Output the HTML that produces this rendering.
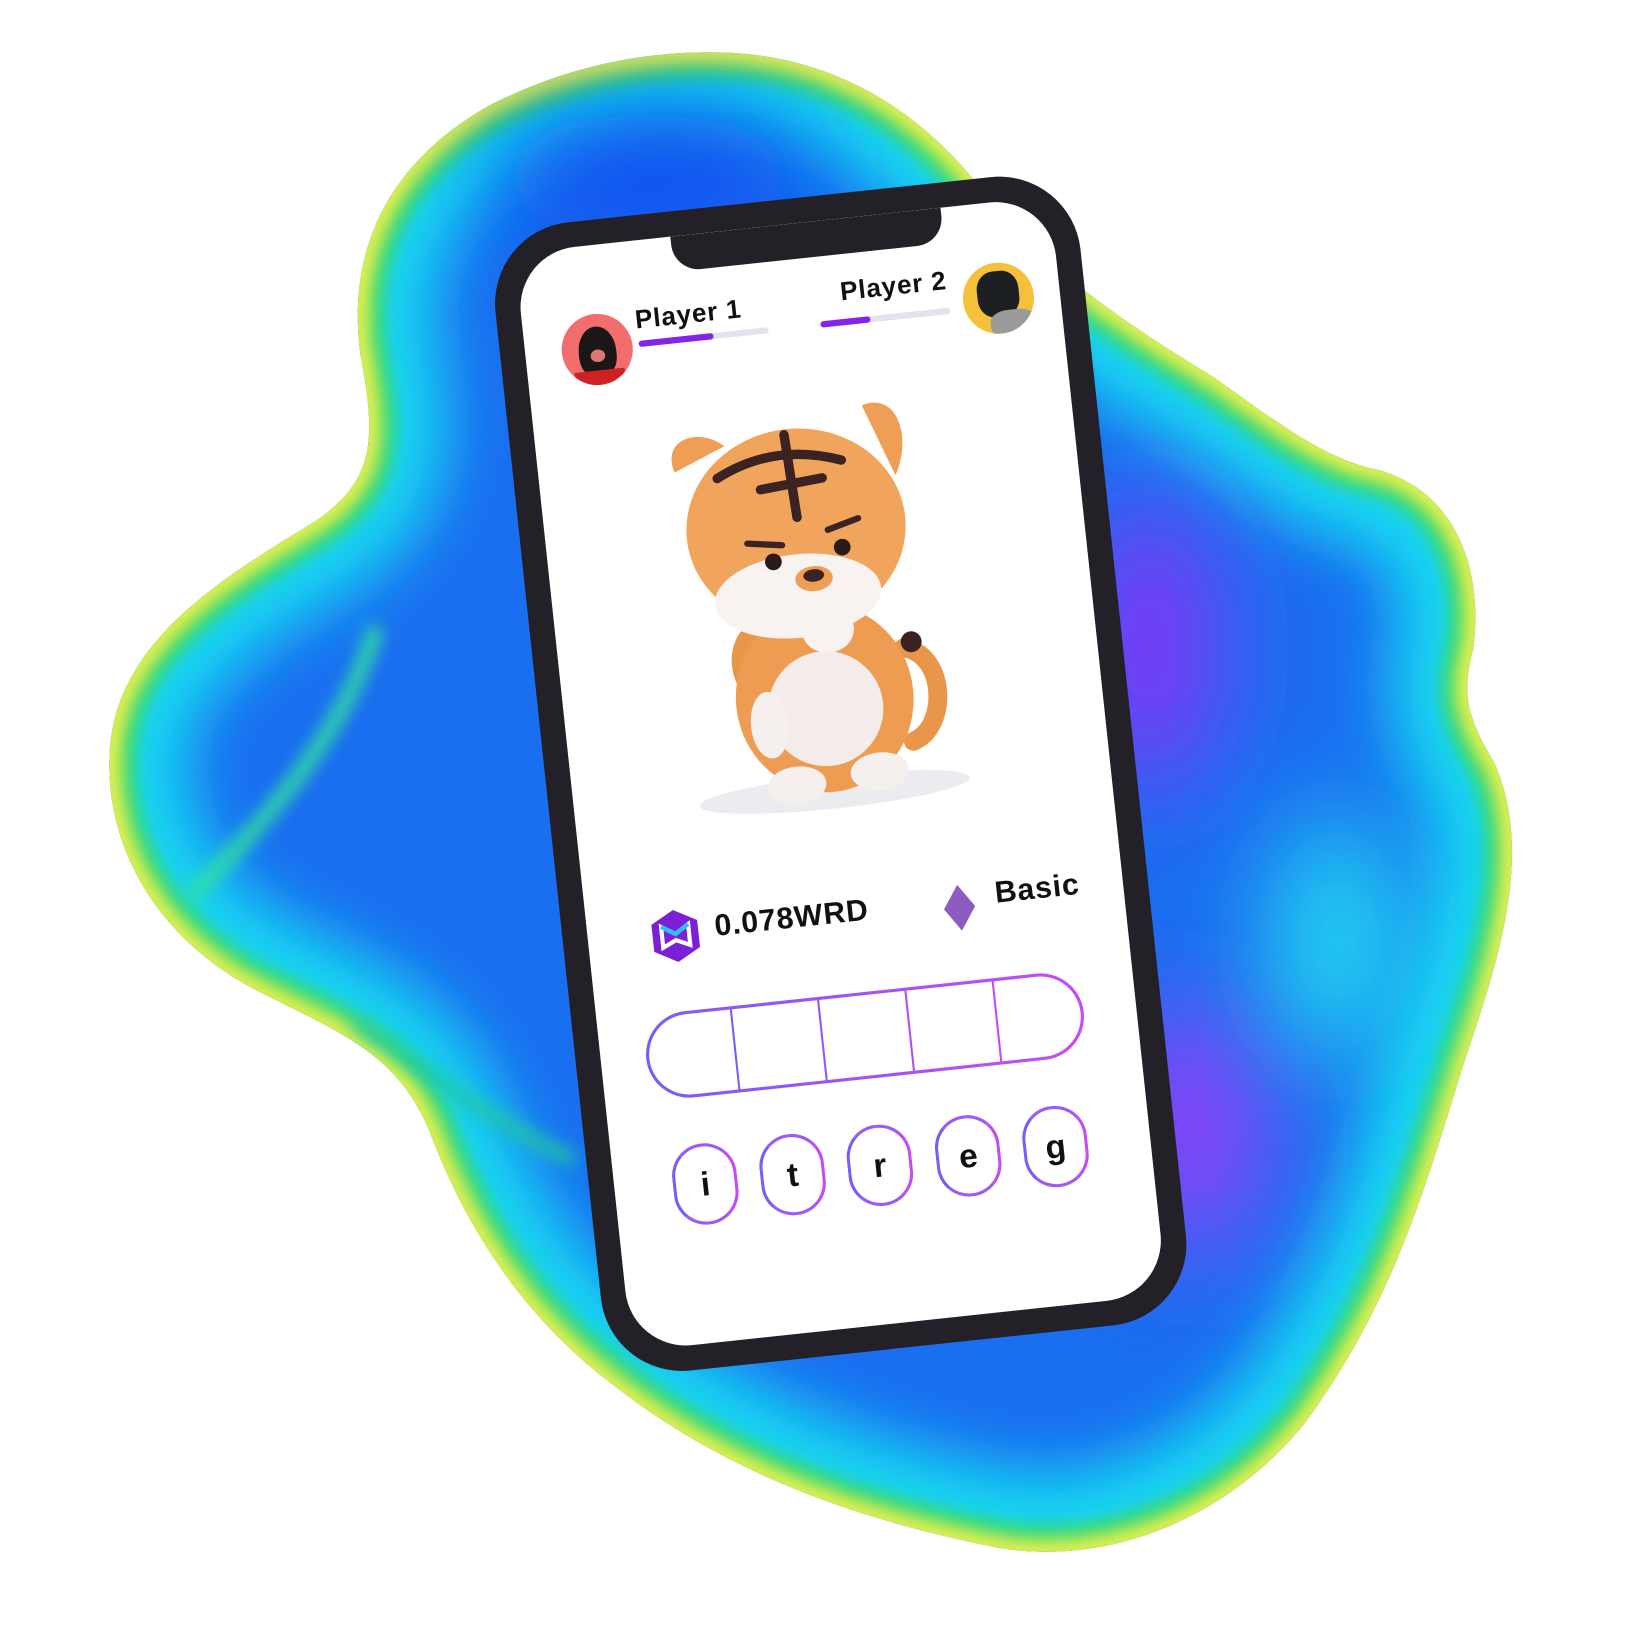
<!DOCTYPE html>
<html><head><meta charset="utf-8"><style>
html,body{margin:0;padding:0;background:#fff;width:1630px;height:1652px;overflow:hidden}
#w{position:absolute;left:0;top:0;width:1560px;height:1581px;transform:scale(1.045);transform-origin:0 0}
#blob{position:absolute;left:0;top:0}
#phone{position:absolute;width:563px;height:1105px;left:523px;top:188px;transform:rotate(-6.1deg);background:#232127;border-radius:78px;font-family:"Liberation Sans",sans-serif}
#screen{position:absolute;left:24px;top:24px;right:24px;bottom:24px;background:#fff;border-radius:58px;overflow:hidden}
#notch{position:absolute;left:150px;top:0;width:260px;height:34px;background:#232127;border-radius:0 0 26px 26px}
.ab{position:absolute}
.av{position:absolute;width:68px;height:68px;border-radius:50%;overflow:hidden}
.t{position:absolute;font-size:25px;font-weight:bold;color:#111;letter-spacing:.8px;white-space:nowrap}
.bar{position:absolute;height:6px;border-radius:3px;background:#e1e4ea}
.bar i{position:absolute;left:0;top:0;height:6px;border-radius:3px;background:#8424e8}
.lt{position:absolute;width:62px;height:78px;border:3px solid #9a5cf5;border-radius:31px;box-sizing:border-box;text-align:center;font-size:32px;font-weight:bold;line-height:72px;color:#111;border-left-color:#7a5cf8;border-right-color:#c44cf5}
</style></head><body><div id="w">
<svg id="blob" width="1560" height="1581" viewBox="0 0 1560 1581">
<defs>
<clipPath id="c"><path id="bp" d="M680 50 C800 50 880 110 930 170 C980 240 1060 300 1160 360 C1230 410 1270 440 1320 450 C1390 470 1420 540 1410 620 C1400 660 1400 680 1430 730 C1470 820 1430 930 1400 1020 C1360 1150 1330 1250 1250 1360 C1170 1460 1050 1500 950 1480 C800 1450 680 1400 580 1320 C490 1250 440 1160 410 1080 C380 1010 330 990 250 950 C150 900 100 810 105 720 C110 620 200 560 300 500 C360 460 360 420 345 340 C330 230 380 150 470 100 C540 65 610 50 680 50 Z"/></clipPath>
<filter id="b1" x="-50%" y="-50%" width="200%" height="200%"><feGaussianBlur stdDeviation="30"/></filter>
<filter id="b2" x="-50%" y="-50%" width="200%" height="200%"><feGaussianBlur stdDeviation="8"/></filter>
<filter id="b3" x="-100%" y="-100%" width="300%" height="300%"><feGaussianBlur stdDeviation="50"/></filter>
</defs>
<g clip-path="url(#c)">
<rect width="1560" height="1581" fill="#1a6ef0"/>
<use href="#bp" fill="none" stroke="#12d8f2" stroke-width="150" filter="url(#b1)"/>
<use href="#bp" fill="none" stroke="#34d870" stroke-width="50" filter="url(#b2)"/>
<use href="#bp" fill="none" stroke="#eef050" stroke-width="22" filter="url(#b2)"/>
<ellipse cx="1100" cy="620" rx="60" ry="140" fill="#8a30f8" filter="url(#b3)"/>
<ellipse cx="1140" cy="1080" rx="70" ry="120" fill="#9040f8" filter="url(#b3)"/>
<ellipse cx="620" cy="170" rx="150" ry="60" fill="#1050f0" filter="url(#b3)"/>
<ellipse cx="1280" cy="900" rx="60" ry="120" fill="#20e0f0" filter="url(#b3)"/>
<path d="M180 860 C260 780 330 700 360 600" stroke="#30e0a0" stroke-width="14" fill="none" filter="url(#b2)"/>
<path d="M340 980 C420 1030 480 1080 550 1110" stroke="#20c8a0" stroke-width="12" fill="none" filter="url(#b2)"/>
</g>
</svg>
<div id="phone"><div id="screen">
<div id="notch"></div>
<div class="av" style="left:35px;top:66px;background:#f26d6d"><div class="ab" style="left:16px;top:12px;width:36px;height:48px;background:#1b1716;border-radius:50% 50% 40% 40%"></div><div class="ab" style="left:27px;top:34px;width:14px;height:12px;background:#d77;border-radius:50%"></div><div class="ab" style="left:10px;top:54px;width:48px;height:14px;background:#c22"></div></div>
<div class="t" style="left:108px;top:62px">Player 1</div>
<div class="bar" style="left:109px;top:96px;width:125px"><i style="width:72px"></i></div>
<div class="t" style="left:306px;top:56px">Player 2</div>
<div class="bar" style="left:284px;top:96px;width:125px"><i style="width:48px"></i></div>
<div class="av" style="left:422px;top:58px;background:#f5c03a"><div class="ab" style="left:14px;top:8px;width:40px;height:44px;background:#1d2022;border-radius:40%"></div><div class="ab" style="left:24px;top:46px;width:44px;height:26px;background:#9a9a9a;border-radius:40%"></div></div>
<svg class="ab" style="left:100px;top:175px" width="290" height="400" viewBox="0 0 290 400">
<ellipse cx="150" cy="370" rx="130" ry="16" fill="#ebebf0"/>
<ellipse cx="95" cy="240" rx="30" ry="40" fill="#e9954a"/>
<path d="M230 240 C270 250 265 320 230 330" stroke="#e9954a" stroke-width="18" fill="none" stroke-linecap="round"/>
<circle cx="238" cy="235" r="10" fill="#3a2020"/>
<ellipse cx="150" cy="280" rx="85" ry="90" fill="#ee9c52"/>
<ellipse cx="150" cy="290" rx="55" ry="55" fill="#f3ecea"/>
<ellipse cx="95" cy="300" rx="18" ry="32" fill="#f5f0ee"/>
<ellipse cx="115" cy="360" rx="28" ry="18" fill="#f5f0ee"/>
<ellipse cx="195" cy="355" rx="28" ry="18" fill="#f5f0ee"/>
<path d="M30 50 C20 15 60 10 80 30 Z" fill="#ef9e55"/>
<path d="M215 5 C250 -5 260 40 240 75 Z" fill="#ef9e55"/>
<ellipse cx="140" cy="115" rx="105" ry="95" fill="#f0a45c"/>
<ellipse cx="135" cy="180" rx="80" ry="40" fill="#f8f3f0"/>
<path d="M70 60 C110 40 150 40 190 55" stroke="#3b2323" stroke-width="9" fill="none" stroke-linecap="round"/>
<path d="M138 25 L142 105 M110 75 L170 70" stroke="#3b2323" stroke-width="9" fill="none" stroke-linecap="round"/>
<circle cx="115" cy="145" r="8" fill="#2a1a1a"/><circle cx="182" cy="138" r="8" fill="#2a1a1a"/>
<path d="M92 125 L125 130 M170 120 L200 112" stroke="#3b2323" stroke-width="6" stroke-linecap="round"/>
<ellipse cx="152" cy="165" rx="18" ry="12" fill="#ef9e55"/><ellipse cx="152" cy="162" rx="10" ry="6" fill="#3b2323"/>
<ellipse cx="160" cy="215" rx="25" ry="22" fill="#f8f3f0"/>
</svg>
<svg class="ab" style="left:60px;top:640px" width="48" height="52" viewBox="0 0 48 52"><path d="M24 1 L46 13 L46 39 L24 51 L2 39 L2 13 Z" fill="#7b1fd8"/><path d="M11 16 L24 24 L37 16 L37 36 L24 30 L11 36 Z" fill="none" stroke="#fff" stroke-width="4"/><path d="M11 16 L24 24 L37 16" fill="none" stroke="#2ac0f5" stroke-width="4"/></svg>
<div class="t" style="left:122px;top:645px;font-size:29px">0.078WRD</div>
<svg class="ab" style="left:340px;top:645px" width="34" height="46" viewBox="0 0 34 46"><path d="M17 1 L32 23 L17 45 L2 23 Z" fill="#8c5cc3"/></svg>
<div class="t" style="left:392px;top:642px;font-size:29px">Basic</div>
<svg class="ab" style="left:43px;top:736px" width="425" height="88" viewBox="0 0 425 88"><defs><linearGradient id="g" x1="0" x2="1"><stop offset="0" stop-color="#7a5cf8"/><stop offset="1" stop-color="#c54cf5"/></linearGradient></defs><rect x="2" y="4" width="418" height="80" rx="40" fill="none" stroke="url(#g)" stroke-width="3"/><path d="M86 4V84M170 4V84M254 4V84M338 4V84" stroke="url(#g)" stroke-width="2"/></svg>
<div class="lt" style="left:56px;top:866px">i</div>
<div class="lt" style="left:140px;top:866px">t</div>
<div class="lt" style="left:224px;top:866px">r</div>
<div class="lt" style="left:309px;top:866px">e</div>
<div class="lt" style="left:393px;top:866px">g</div>
</div></div>
</div></body></html>
